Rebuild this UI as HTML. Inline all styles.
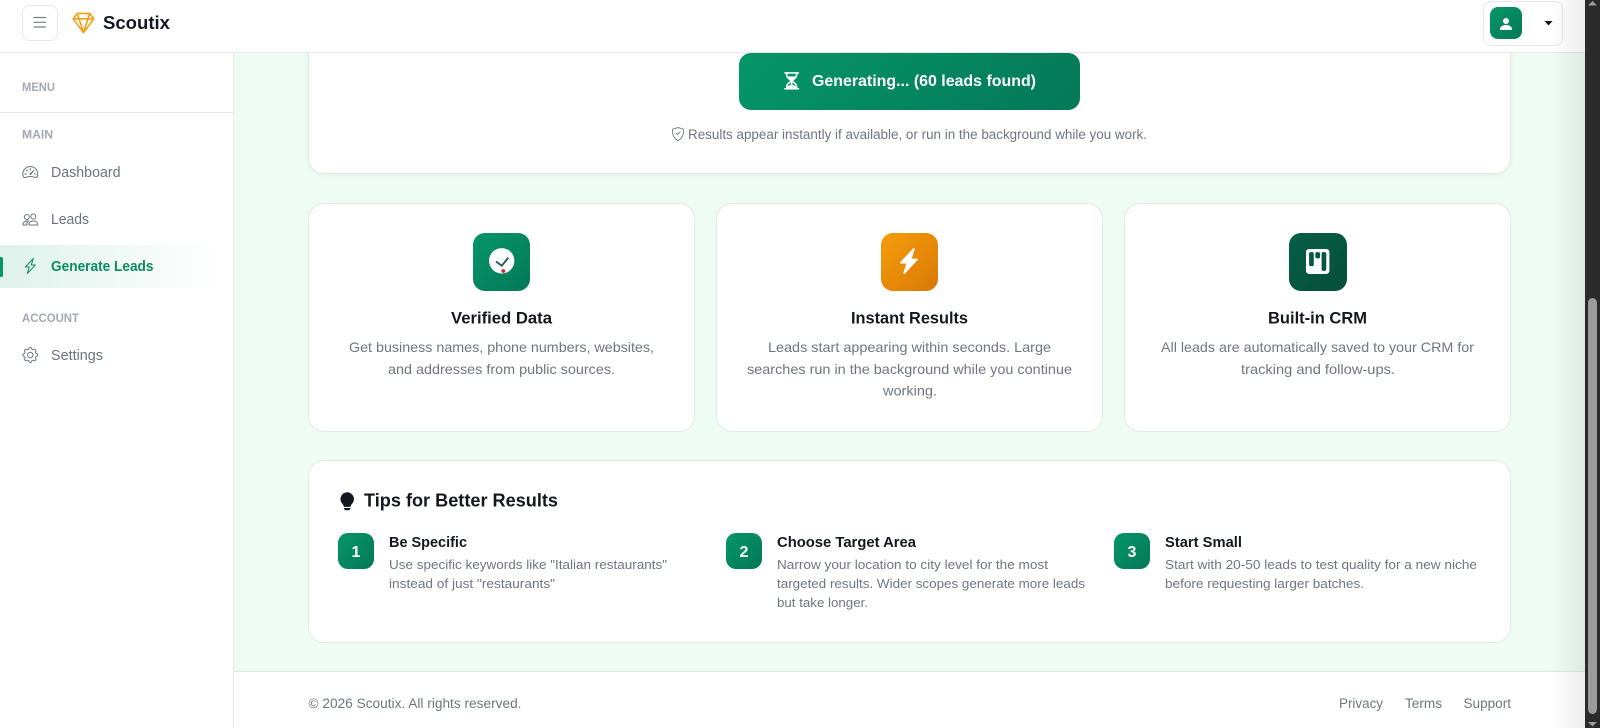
<!DOCTYPE html>
<html lang="en">
<head>
<meta charset="utf-8">
<title>Scoutix - Generate Leads</title>
<style>
html,body{margin:0;padding:0;width:1600px;height:728px;overflow:hidden;background:#effcf4}
div{box-sizing:border-box;position:absolute}
svg{position:absolute;left:0;top:0;overflow:visible}
text{font-family:"Liberation Sans",sans-serif}
.g{fill:#6f7580;font-size:13.5px}
.f{fill:#6f7580;font-size:14px}
.t{fill:#6f7580;font-size:13px}
.d{fill:#6b7280;font-size:14.5px}
.l{fill:#a3a8b1;font-size:11.5px;font-weight:700}
.h{fill:#14171f;font-weight:700}
.card{background:#fff;border:1px solid #dfe9e5;border-radius:16px}
.gr{background:linear-gradient(135deg,#059669,#047857)}
.num{left:338px;top:533px;width:36px;height:36px;border-radius:10px}
</style>
</head>
<body>
<!-- Main card -->
<div class="card" style="left:308px;top:-40px;width:1203px;height:214px;box-shadow:0 1px 6px rgba(16,60,40,.06)"></div>
<div class="gr" style="left:739px;top:53px;width:341px;height:57px;border-radius:12px"></div>

<!-- Feature cards -->
<div class="card" style="left:308px;top:203px;width:387px;height:229px"></div>
<div class="card" style="left:716px;top:203px;width:387px;height:229px"></div>
<div class="card" style="left:1124px;top:203px;width:387px;height:229px"></div>
<div class="gr" style="left:473px;top:233px;width:57px;height:58px;border-radius:12px"></div>
<div style="left:881px;top:233px;width:57px;height:58px;border-radius:12px;background:linear-gradient(135deg,#f59e0b,#d97706)"></div>
<div style="left:1289px;top:233px;width:58px;height:58px;border-radius:12px;background:linear-gradient(135deg,#065f46,#064e3b)"></div>

<!-- Tips -->
<div class="card" style="left:308px;top:460px;width:1203px;height:183px"></div>
<div class="gr num"></div>
<div class="gr num" style="left:726px"></div>
<div class="gr num" style="left:1114px"></div>

<!-- Footer -->
<div style="left:234px;top:671px;width:1351px;height:57px;background:#fff;border-top:1px solid #dfe5e3"></div>

<!-- Sidebar -->
<div style="left:0;top:52px;width:234px;height:676px;background:#fff;border-right:1px solid #e5e8ea"></div>
<div style="left:0;top:112px;width:233px;height:1px;background:#e5e7eb"></div>
<div style="left:0;top:245px;width:218px;height:43px;background:linear-gradient(90deg,rgba(5,150,105,.13),rgba(5,150,105,0))"></div>
<div style="left:0;top:257px;width:3px;height:20px;background:#059669;border-radius:0 2px 2px 0"></div>

<!-- Header -->
<div style="left:0;top:0;width:1585px;height:53px;background:#fff;border-bottom:1px solid #e5e7eb"></div>
<div style="left:22px;top:5px;width:36px;height:36px;background:#fff;border:1px solid #e5e7eb;border-radius:8px"></div>
<div style="left:1483px;top:1px;width:80px;height:45px;background:#fff;border:1px solid #e5e7eb;border-radius:8px"></div>
<div class="gr" style="left:1490px;top:7px;width:32px;height:32px;border-radius:8px"></div>

<!-- Right-edge shade -->
<div style="left:1550px;top:0;width:35px;height:728px;background:linear-gradient(90deg,rgba(40,50,45,0),rgba(40,50,45,.09))"></div>

<!-- Scrollbar -->
<div style="left:1585px;top:0;width:15px;height:728px;background:#2b2b2b"></div>
<div style="left:1588px;top:298px;width:9px;height:416px;background:#9b9b9b;border-radius:5px"></div>

<svg width="1600" height="728" viewBox="0 0 1600 728">
  <!-- scrollbar arrows -->
  <path d="M1592.5 1l4.500 4.500h-9z" fill="#9b9b9b"/>
  <path d="M1588 722h9l-4.500 4.500z" fill="#9b9b9b"/>

  <!-- hamburger -->
  <path d="M33.500 17.500h12.500M33.500 22.300h12.500M33.500 27h12.500" stroke="#7a7f87" stroke-width="1.200" fill="none"/>

  <!-- logo gem -->
  <path transform="translate(72.500 12) scale(1.375)" fill="#f39c12" stroke="#f39c12" stroke-width=".15" d="M3.1.7a.5.5 0 0 1 .4-.2h9a.5.5 0 0 1 .4.2l2.976 3.974c.149.185.156.45.01.644L8.4 15.3a.5.5 0 0 1-.8 0L.1 5.3a.5.5 0 0 1 0-.6zm11.386 3.785-1.806-2.41-.776 2.413zm-3.633.004.961-2.989H4.186l.963 2.995zM5.470 5.495 8 13.366l2.532-7.876zm-1.371-.999-.78-2.422-1.818 2.425zM1.499 5.500l5.113 6.817-2.192-6.820zm7.889 6.817 5.123-6.830-2.928.002z"/>
  <text x="103" y="29" class="h" font-size="18.5" textLength="67" lengthAdjust="spacingAndGlyphs">Scoutix</text>

  <!-- avatar -->
  <path transform="translate(1498 16)" fill="#fff" d="M3 14s-1 0-1-1 1-4 6-4 6 3 6 4-1 1-1 1zm5-6a3 3 0 1 0 0-6 3 3 0 0 0 0 6"/>
  <path d="M1544.500 21h8l-4 4.500z" fill="#14171f"/>

  <!-- sidebar labels -->
  <text x="22" y="91" class="l" textLength="33" lengthAdjust="spacingAndGlyphs">MENU</text>
  <text x="22" y="138.500" class="l" textLength="31" lengthAdjust="spacingAndGlyphs">MAIN</text>
  <text x="22" y="322" class="l" textLength="57" lengthAdjust="spacingAndGlyphs">ACCOUNT</text>

  <text x="51" y="177" class="d" textLength="69.500" lengthAdjust="spacingAndGlyphs">Dashboard</text>
  <text x="51" y="224" class="d" textLength="38" lengthAdjust="spacingAndGlyphs">Leads</text>
  <text x="51" y="271" class="d" style="fill:#0b8a62;font-weight:700" textLength="102.500" lengthAdjust="spacingAndGlyphs">Generate Leads</text>
  <text x="51" y="360" class="d" textLength="52" lengthAdjust="spacingAndGlyphs">Settings</text>

  <!-- dashboard icon -->
  <g transform="translate(22.300 164)" fill="#6b7280">
    <path d="M8 4a.5.5 0 0 1 .5.5V6a.5.5 0 0 1-1 0V4.500A.5.5 0 0 1 8 4M3.732 5.732a.5.5 0 0 1 .707 0l.915.914a.5.5 0 1 1-.708.708l-.914-.915a.5.5 0 0 1 0-.707M2 10a.5.5 0 0 1 .5-.5h1.586a.5.5 0 0 1 0 1H2.500A.5.5 0 0 1 2 10m9.500 0a.5.5 0 0 1 .5-.5h1.500a.5.5 0 0 1 0 1H12a.5.5 0 0 1-.5-.5m.754-4.246a.39.39 0 0 0-.527-.02L7.547 9.310a.91.91 0 1 0 1.302 1.258l3.434-4.297a.39.39 0 0 0-.029-.518z"/>
    <path fill-rule="evenodd" d="M0 10a8 8 0 1 1 15.547 2.661c-.442 1.253-1.845 1.602-2.932 1.250C11.309 13.488 9.475 13 8 13c-1.474 0-3.310.488-4.615.911-1.087.352-2.490.003-2.932-1.250A8 8 0 0 1 0 10m8-7a7 7 0 0 0-6.603 9.329c.203.575.923.876 1.680.630C4.397 12.533 6.358 12 8 12s3.604.532 4.923.96c.757.245 1.477-.056 1.680-.631A7 7 0 0 0 8 3"/>
  </g>
  <!-- leads icon -->
  <path transform="translate(22.300 211.500)" fill="#6b7280" d="M15 14s1 0 1-1-1-4-5-4-5 3-5 4 1 1 1 1zm-7.978-1L7 12.996c.001-.264.167-1.030.76-1.720C8.312 10.629 9.282 10 11 10c1.717 0 2.687.630 3.240 1.276.593.69.758 1.457.760 1.720l-.008.002-.014.002zM11 7a2 2 0 1 0 0-4 2 2 0 0 0 0 4m3-2a3 3 0 1 1-6 0 3 3 0 0 1 6 0M6.936 9.280a6 6 0 0 0-1.230-.247A7 7 0 0 0 5 9c-4 0-5 3-5 4q0 1 1 1h4.216A2.240 2.240 0 0 1 5 13c0-1.010.377-2.042 1.090-2.904.243-.294.526-.569.846-.816M4.920 10A5.500 5.500 0 0 0 4 13H1c0-.260.164-1.030.760-1.724.545-.636 1.492-1.256 3.160-1.275ZM1.500 5.500a3 3 0 1 1 6 0 3 3 0 0 1-6 0m3-2a2 2 0 1 0 0 4 2 2 0 0 0 0-4"/>
  <!-- active bolt -->
  <path transform="translate(22.300 258)" fill="#0b8a62" d="M11.251.068a.5.5 0 0 1 .227.58L9.677 6.500H13a.5.5 0 0 1 .364.843l-8 8.500a.5.5 0 0 1-.842-.49L6.323 9.500H3a.5.5 0 0 1-.364-.843l8-8.500a.5.5 0 0 1 .615-.09zM4.157 8.500H7a.5.5 0 0 1 .478.647L6.110 13.590l5.732-6.090H9a.5.5 0 0 1-.478-.647L9.890 2.410z"/>
  <!-- settings icon -->
  <g transform="translate(22.300 347)" fill="#6b7280">
    <path d="M8 4.754a3.246 3.246 0 1 0 0 6.492 3.246 3.246 0 0 0 0-6.492M5.754 8a2.246 2.246 0 1 1 4.492 0 2.246 2.246 0 0 1-4.492 0"/>
    <path d="M9.796 1.343c-.527-1.790-3.065-1.790-3.592 0l-.094.319a.873.873 0 0 1-1.255.520l-.292-.160c-1.640-.892-3.433.902-2.540 2.541l.159.292a.873.873 0 0 1-.520 1.255l-.319.094c-1.790.527-1.790 3.065 0 3.592l.319.094a.873.873 0 0 1 .520 1.255l-.160.292c-.892 1.640.901 3.434 2.541 2.540l.292-.159a.873.873 0 0 1 1.255.520l.094.319c.527 1.790 3.065 1.790 3.592 0l.094-.319a.873.873 0 0 1 1.255-.520l.292.160c1.640.893 3.434-.902 2.540-2.541l-.159-.292a.873.873 0 0 1 .520-1.255l.319-.094c1.790-.527 1.790-3.065 0-3.592l-.319-.094a.873.873 0 0 1-.520-1.255l.160-.292c.893-1.640-.902-3.433-2.541-2.540l-.292.159a.873.873 0 0 1-1.255-.520zm-2.633.283c.246-.835 1.428-.835 1.674 0l.094.319a1.873 1.873 0 0 0 2.693 1.115l.291-.160c.764-.415 1.600.420 1.184 1.185l-.159.292a1.873 1.873 0 0 0 1.116 2.692l.318.094c.835.246.835 1.428 0 1.674l-.319.094a1.873 1.873 0 0 0-1.115 2.693l.160.291c.415.764-.420 1.600-1.185 1.184l-.291-.159a1.873 1.873 0 0 0-2.693 1.116l-.094.318c-.246.835-1.428.835-1.674 0l-.094-.319a1.873 1.873 0 0 0-2.692-1.115l-.292.160c-.764.415-1.600-.420-1.184-1.185l.159-.291A1.873 1.873 0 0 0 1.945 8.930l-.319-.094c-.835-.246-.835-1.428 0-1.674l.319-.094A1.873 1.873 0 0 0 3.060 4.377l-.160-.292c-.415-.764.420-1.600 1.185-1.184l.292.159a1.873 1.873 0 0 0 2.692-1.115z"/>
  </g>

  <!-- button content -->
  <path transform="translate(781.900 71.100) scale(1.220)" fill="#fff" stroke="#fff" stroke-width=".3" d="M2.500 15a.5.5 0 1 1 0-1h1v-1a4.500 4.500 0 0 1 2.557-4.060c.29-.139.443-.377.443-.59v-.7c0-.213-.154-.451-.443-.59A4.500 4.500 0 0 1 3.500 3V2h-1a.5.5 0 0 1 0-1h11a.5.5 0 0 1 0 1h-1v1a4.500 4.500 0 0 1-2.557 4.060c-.29.139-.443.377-.443.59v.7c0 .213.154.451.443.59A4.500 4.500 0 0 1 12.500 13v1h1a.5.5 0 0 1 0 1zm2-13v1c0 .537.12 1.045.337 1.500h6.326c.216-.455.337-.963.337-1.500V2zm3 6.350c0 .701-.478 1.236-1.011 1.492A3.500 3.500 0 0 0 4.500 13s.866-1.299 3-1.480zm1 0v3.170c2.134.181 3 1.480 3 1.480a3.500 3.500 0 0 0-1.989-3.158C8.978 9.586 8.500 9.052 8.500 8.351z"/>
  <text x="812" y="85.800" fill="#fff" font-size="15.5" font-weight="700" textLength="224" lengthAdjust="spacingAndGlyphs">Generating... (60 leads found)</text>

  <!-- helper text -->
  <g transform="translate(671.200 127.300) scale(.85)" fill="#6f7580">
    <path d="M5.338 1.590a61 61 0 0 0-2.837.856.48.48 0 0 0-.328.39c-.554 4.157.726 7.190 2.253 9.188a10.700 10.700 0 0 0 2.287 2.233c.346.244.652.42.893.533q.18.085.293.118a1 1 0 0 0 .101.025 1 1 0 0 0 .1-.025q.114-.034.294-.118c.24-.113.547-.29.893-.533a10.700 10.700 0 0 0 2.287-2.233c1.527-1.997 2.807-5.031 2.253-9.188a.48.48 0 0 0-.328-.39c-.651-.213-1.750-.56-2.837-.855C9.552 1.290 8.531 1.067 8 1.067c-.53 0-1.552.223-2.662.524zM5.072.56C6.157.265 7.310 0 8 0s1.843.265 2.928.56c1.110.3 2.229.655 2.887.87a1.540 1.540 0 0 1 1.044 1.262c.596 4.477-.787 7.795-2.465 9.990a11.800 11.800 0 0 1-2.517 2.453 7 7 0 0 1-1.048.625c-.28.132-.581.24-.829.24s-.548-.108-.829-.24a7 7 0 0 1-1.048-.625 11.800 11.800 0 0 1-2.517-2.453C1.928 10.487.545 7.169 1.141 2.692A1.540 1.540 0 0 1 2.185 1.430 63 63 0 0 1 5.072.56"/>
    <path d="M10.854 5.146a.5.5 0 0 1 0 .708l-3 3a.5.5 0 0 1-.708 0l-1.500-1.500a.5.5 0 1 1 .708-.708L7.500 7.793l2.646-2.647a.5.5 0 0 1 .708 0"/>
  </g>
  <text x="688" y="139" class="g" textLength="459" lengthAdjust="spacingAndGlyphs">Results appear instantly if available, or run in the background while you work.</text>

  <!-- feature icons -->
  <circle cx="501.700" cy="260.800" r="12.700" fill="#fff"/>
  <path d="M496 261.500l5.700 4.200 6.600-8" fill="none" stroke="#1f5f57" stroke-width="1.900"/>
  <circle cx="503.300" cy="271" r="1.900" fill="#dc2626"/>
  <path transform="translate(896 248) scale(1.625)" fill="#fff" d="M11.251.068a.5.5 0 0 1 .227.58L9.677 6.500H13a.5.5 0 0 1 .364.843l-8 8.500a.5.5 0 0 1-.842-.49L6.323 9.500H3a.5.5 0 0 1-.364-.843l8-8.500a.5.5 0 0 1 .615-.09z"/>
  <path transform="translate(1305.200 249) scale(1.560)" fill="#fff" fill-rule="evenodd" d="M2.500 0a2 2 0 0 0-2 2v12a2 2 0 0 0 2 2h11a2 2 0 0 0 2-2V2a2 2 0 0 0-2-2zm5 2h1a1 1 0 0 1 1 1v2a1 1 0 0 1-1 1h-1a1 1 0 0 1-1-1V3a1 1 0 0 1 1-1m-5 1a1 1 0 0 1 1-1h1a1 1 0 0 1 1 1v7a1 1 0 0 1-1 1h-1a1 1 0 0 1-1-1zm9-1h1a1 1 0 0 1 1 1v10a1 1 0 0 1-1 1h-1a1 1 0 0 1-1-1V3a1 1 0 0 1 1-1"/>

  <!-- feature text -->
  <text x="451" y="323.500" class="h" font-size="16.500" textLength="101" lengthAdjust="spacingAndGlyphs">Verified Data</text>
  <text x="349" y="352" class="f" textLength="305" lengthAdjust="spacingAndGlyphs">Get business names, phone numbers, websites,</text>
  <text x="388" y="374" class="f" textLength="227" lengthAdjust="spacingAndGlyphs">and addresses from public sources.</text>

  <text x="851" y="323.500" class="h" font-size="16.500" textLength="117" lengthAdjust="spacingAndGlyphs">Instant Results</text>
  <text x="768" y="352" class="f" textLength="283" lengthAdjust="spacingAndGlyphs">Leads start appearing within seconds. Large</text>
  <text x="747" y="374" class="f" textLength="325" lengthAdjust="spacingAndGlyphs">searches run in the background while you continue</text>
  <text x="883" y="395.500" class="f" textLength="54" lengthAdjust="spacingAndGlyphs">working.</text>

  <text x="1268" y="323.500" class="h" font-size="16.500" textLength="99" lengthAdjust="spacingAndGlyphs">Built-in CRM</text>
  <text x="1161" y="352" class="f" textLength="313" lengthAdjust="spacingAndGlyphs">All leads are automatically saved to your CRM for</text>
  <text x="1241" y="374" class="f" textLength="154" lengthAdjust="spacingAndGlyphs">tracking and follow-ups.</text>

  <!-- tips -->
  <path transform="translate(338.200 492.300) scale(1.125)" fill="#14171f" d="M2 6a6 6 0 1 1 10.174 4.310c-.203.196-.359.400-.453.619l-.762 1.769A.5.5 0 0 1 10.500 13h-5a.5.5 0 0 1-.460-.302l-.761-1.770a2 2 0 0 0-.453-.618A5.980 5.980 0 0 1 2 6m3 8.500a.5.5 0 0 1 .5-.5h5a.5.5 0 0 1 0 1l-.224.447a1 1 0 0 1-.894.553H6.618a1 1 0 0 1-.894-.553L5.500 15a.5.5 0 0 1-.5-.5"/>
  <text x="364" y="506.500" class="h" font-size="18.500" textLength="194" lengthAdjust="spacingAndGlyphs">Tips for Better Results</text>

  <text x="356" y="557" fill="#fff" font-size="16" font-weight="700" text-anchor="middle">1</text>
  <text x="744" y="557" fill="#fff" font-size="16" font-weight="700" text-anchor="middle">2</text>
  <text x="1132" y="557" fill="#fff" font-size="16" font-weight="700" text-anchor="middle">3</text>

  <text x="389" y="547" class="h" font-size="14.500" textLength="78" lengthAdjust="spacingAndGlyphs">Be Specific</text>
  <text x="389" y="569" class="t" textLength="278" lengthAdjust="spacingAndGlyphs">Use specific keywords like "Italian restaurants"</text>
  <text x="389" y="588" class="t" textLength="166" lengthAdjust="spacingAndGlyphs">instead of just "restaurants"</text>

  <text x="777" y="547" class="h" font-size="14.500" textLength="139" lengthAdjust="spacingAndGlyphs">Choose Target Area</text>
  <text x="777" y="569" class="t" textLength="271" lengthAdjust="spacingAndGlyphs">Narrow your location to city level for the most</text>
  <text x="777" y="588" class="t" textLength="308" lengthAdjust="spacingAndGlyphs">targeted results. Wider scopes generate more leads</text>
  <text x="777" y="607" class="t" textLength="91" lengthAdjust="spacingAndGlyphs">but take longer.</text>

  <text x="1165" y="547" class="h" font-size="14.500" textLength="77" lengthAdjust="spacingAndGlyphs">Start Small</text>
  <text x="1165" y="569" class="t" textLength="312" lengthAdjust="spacingAndGlyphs">Start with 20-50 leads to test quality for a new niche</text>
  <text x="1165" y="588" class="t" textLength="199" lengthAdjust="spacingAndGlyphs">before requesting larger batches.</text>

  <!-- footer -->
  <text x="308.500" y="708" class="g" textLength="213" lengthAdjust="spacingAndGlyphs">© 2026 Scoutix. All rights reserved.</text>
  <text x="1339" y="708" class="g" textLength="44" lengthAdjust="spacingAndGlyphs">Privacy</text>
  <text x="1405" y="708" class="g" textLength="37" lengthAdjust="spacingAndGlyphs">Terms</text>
  <text x="1463.500" y="708" class="g" textLength="47.500" lengthAdjust="spacingAndGlyphs">Support</text>
</svg>
</body>
</html>
